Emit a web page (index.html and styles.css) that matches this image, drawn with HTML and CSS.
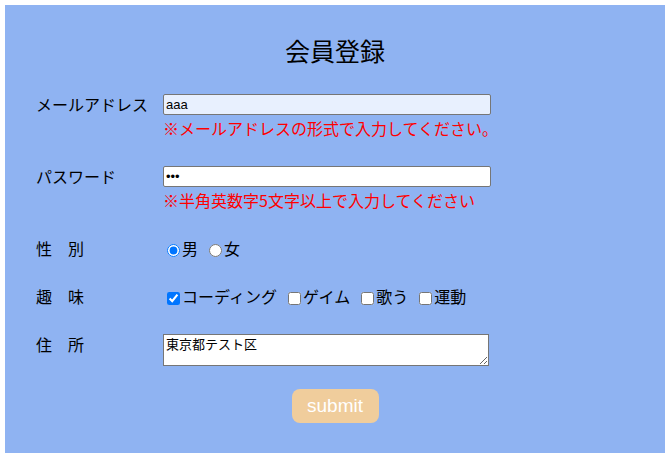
FILE: index.html
```html
<!DOCTYPE html>
<html lang="ja">
<head>
  <title>会員登録</title>
  <meta charset="UTF-8">
  <meta name="viewport" content="width=device-width, initial-scale=1">
  <link rel="stylesheet" href="styles.css">
</head>
<body>
  <form class="signup">
    <h1>会員登録</h1>

    <div class="row">
      <label class="label">メールアドレス</label>
      <div class="field">
        <input type="text" class="text email" value="aaa">
        <p class="error">※メールアドレスの形式で入力してください。</p>
      </div>
    </div>

    <div class="row">
      <label class="label">パスワード</label>
      <div class="field">
        <input type="password" class="text" value="aaa">
        <p class="error">※半角英数字5文字以上で入力してください</p>
      </div>
    </div>

    <div class="row">
      <label class="label">性　別</label>
      <div class="field choices">
        <label><input type="radio" name="sex" checked>男</label>
        <label><input type="radio" name="sex">女</label>
      </div>
    </div>

    <div class="row">
      <label class="label">趣　味</label>
      <div class="field choices">
        <label><input type="checkbox" checked>コーディング</label>
        <label><input type="checkbox">ゲイム</label>
        <label><input type="checkbox">歌う</label>
        <label><input type="checkbox">運動</label>
      </div>
    </div>

    <div class="row">
      <label class="label">住　所</label>
      <div class="field">
        <textarea class="address">東京都テスト区</textarea>
      </div>
    </div>

    <div class="actions">
      <button type="button">submit</button>
    </div>
  </form>
</body>
</html>
```

FILE: styles.css
```css
body {
  margin: 0;
  padding: 5px 7px 8px 5px;
  font-family: "Noto Sans CJK JP", sans-serif;
  font-size: 16px;
  background: #fff;
}
.signup {
  background: #8fb3f2;
  height: 448px;
  box-sizing: border-box;
  padding: 33px 31px 0;
}
h1 {
  margin: 0 0 32px;
  text-align: center;
  font-size: 25px;
  font-weight: normal;
  line-height: 24px;
  color: #000;
}
.row {
  display: flex;
  align-items: flex-start;
  margin-bottom: 28px;
}
.label {
  width: 127px;
  line-height: 20px;
  color: #000;
}
.field {
  flex: 1;
}
.text {
  display: block;
  width: 328px;
  height: 21px;
  box-sizing: border-box;
  margin: 0;
  padding: 1px 2px;
  border: 1px solid #767676;
  border-radius: 2px;
  font-size: 13px;
  background: #fff;
}
.email {
  background: #e8f0fe;
}
.error {
  margin: 3px 0 0;
  color: #ff0000;
  line-height: 20px;
}
.choices {
  display: flex;
  gap: 7px;
  line-height: 20px;
}
.choices input {
  margin: 0 2px 0 4px;
  vertical-align: -2px;
}
.address {
  display: block;
  width: 326px;
  height: 32px;
  box-sizing: border-box;
  margin: 0;
  padding: 1px 2px;
  border: 1px solid #767676;
  font-family: "Noto Sans CJK JP", sans-serif;
  font-size: 13px;
  line-height: 16px;
  resize: both;
}
.actions {
  text-align: center;
  margin-top: -5px;
}
button {
  width: 87px;
  height: 34px;
  border: none;
  border-radius: 8px;
  background: #f0cd9c;
  color: #fff;
  font-family: "Liberation Sans", Arial, sans-serif;
  font-size: 19px;
  cursor: pointer;
}
```
